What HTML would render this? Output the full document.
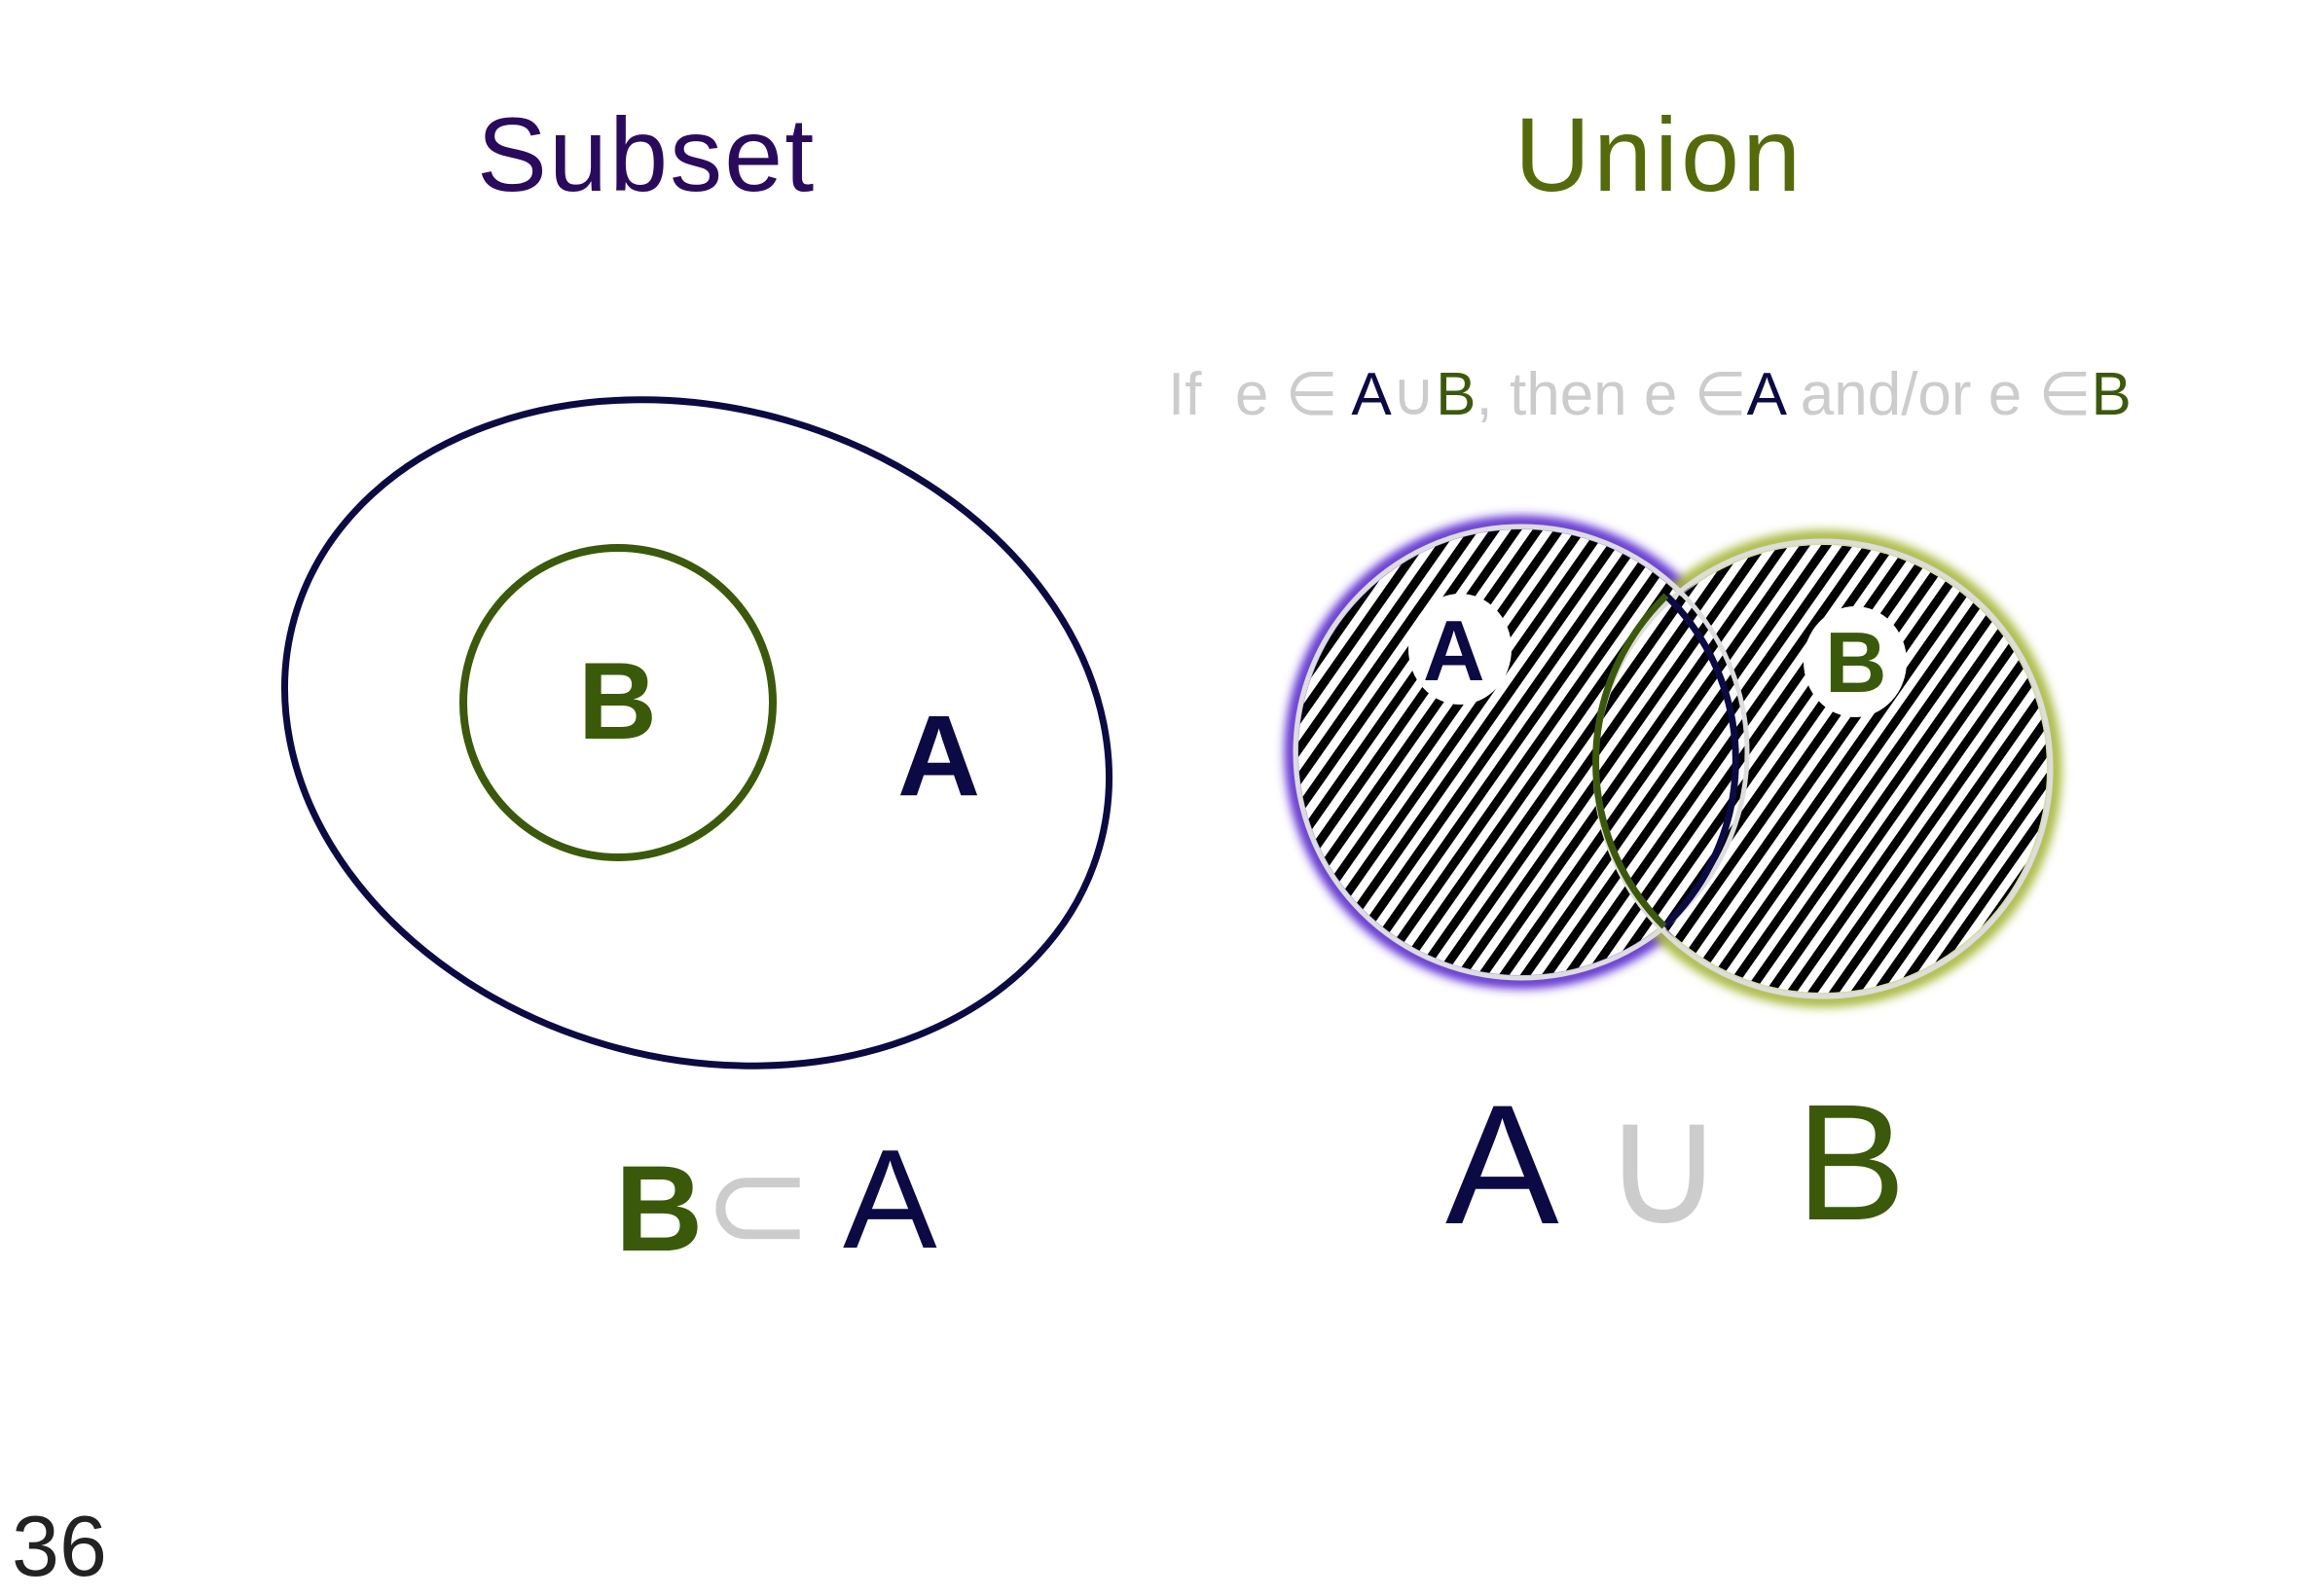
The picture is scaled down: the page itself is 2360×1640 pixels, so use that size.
<!DOCTYPE html>
<html><head><meta charset="utf-8"><style>
html,body{margin:0;padding:0;background:#fff;}
body{width:2360px;height:1640px;position:relative;overflow:hidden;font-family:"Liberation Sans",sans-serif;}
.t{position:absolute;white-space:nowrap;line-height:1;}
</style></head><body>
<svg width="2360" height="1640" style="position:absolute;left:0;top:0">
<defs>
<pattern id="h" patternUnits="userSpaceOnUse" width="18" height="18" patternTransform="rotate(35)">
<rect width="18" height="18" fill="#fff"/><rect width="9" height="18" fill="#000"/>
</pattern>
<filter id="g" x="-20%" y="-20%" width="140%" height="140%"><feGaussianBlur stdDeviation="5"/></filter>
</defs>
<ellipse cx="716" cy="753" rx="430" ry="334" transform="rotate(16 716 753)" fill="none" stroke="#0b0a45" stroke-width="7"/>
<circle cx="635" cy="722" r="159" fill="none" stroke="#3a5a0a" stroke-width="8"/>
<circle cx="1563" cy="773" r="236" fill="none" stroke="#5a2ad0" stroke-width="14" filter="url(#g)"/>
<circle cx="1873" cy="790" r="238" fill="none" stroke="#a8b83a" stroke-width="14" filter="url(#g)"/>
<circle cx="1563" cy="773" r="229" fill="url(#h)"/>
<circle cx="1873" cy="790" r="230" fill="url(#h)"/>
<circle cx="1563" cy="773" r="232" fill="none" stroke="#ddd" stroke-width="5"/>
<circle cx="1873" cy="790" r="234" fill="none" stroke="#ddd" stroke-width="5"/>
<path d="M1712 612 A236 236 0 0 1 1710 952" fill="none" stroke="#0b0a45" stroke-width="7"/>
<path d="M1712 612 A238 238 0 0 0 1710 952" fill="none" stroke="#3a5a0a" stroke-width="7"/>
<ellipse cx="1500" cy="667" rx="53" ry="57" fill="#fff"/>
<ellipse cx="1906" cy="680" rx="53" ry="57" fill="#fff"/>
</svg>
<div class="t" style="left:490px;top:105px;font-size:108px;color:#2a0a5e;letter-spacing:2px">Subset</div>
<div class="t" style="left:1556px;top:105px;font-size:108px;color:#556b0a;letter-spacing:3px">Union</div>
<div class="t" style="left:594px;top:665px;font-size:112px;color:#3a5a0a;font-weight:bold">B</div>
<div class="t" style="left:922px;top:718px;font-size:118px;color:#0b0a45;font-weight:bold">A</div>
<div class="t" style="left:632px;top:1180px;font-size:125px;color:#3a5a0a;font-weight:bold">B</div>
<div class="t" style="left:722px;top:1170px;font-size:135px;color:#ccc">⊂</div>
<div class="t" style="left:866px;top:1160px;font-size:145px;color:#0b0a45">A</div>
<div class="t" style="left:1200px;top:375px;font-size:62px;color:#ccc">If &nbsp;e ∈ <span style="color:#0b0a45">A</span>∪<span style="color:#3a5a0a">B</span>, then e ∈<span style="color:#0b0a45">A</span> and/or e ∈<span style="color:#3a5a0a">B</span></div>
<div class="t" style="left:1462px;top:625px;font-size:88px;color:#0b0a45;font-weight:bold">A</div>
<div class="t" style="left:1875px;top:637px;font-size:88px;color:#3a5a0a;font-weight:bold">B</div>
<div class="t" style="left:1485px;top:1110px;font-size:175px;color:#0b0a45">A</div>
<div class="t" style="left:1645px;top:1110px;font-size:175px;color:#ccc">∪</div>
<div class="t" style="left:1845px;top:1110px;font-size:170px;color:#3a5a0a">B</div>
<div class="t" style="left:12px;top:1545px;font-size:88px;color:#222">36</div>
</body></html>
